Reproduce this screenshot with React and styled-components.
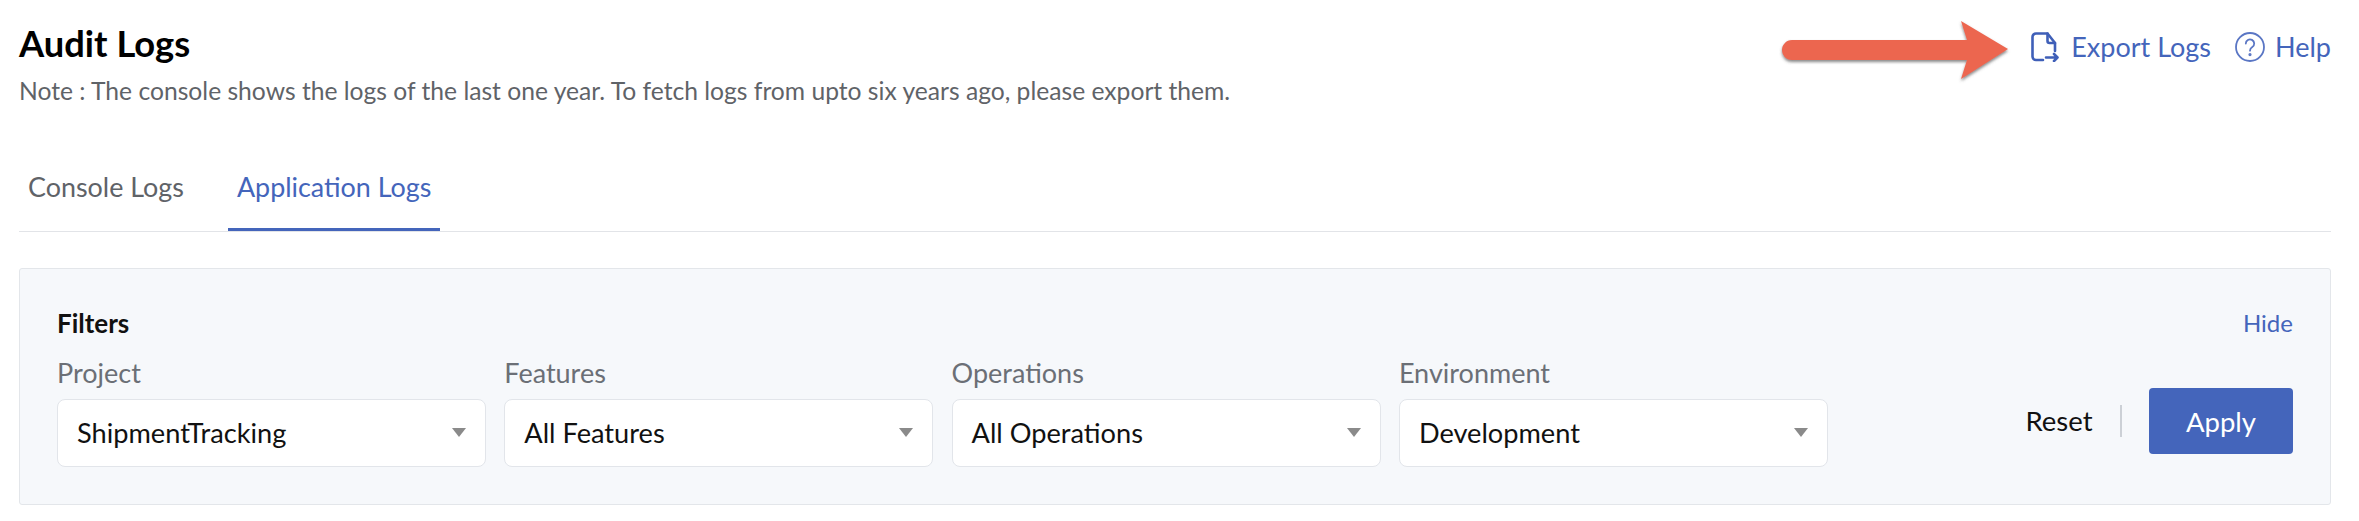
import React from 'react';
import styled, { createGlobalStyle } from 'styled-components';

const GlobalStyle = createGlobalStyle`
  html, body {
    margin: 0;
    background: #fff;
    font-family: Lato, "Open Sans", sans-serif;
  }
`;

const Page = styled.div`
  width: 2359px;
  height: 521px;
  box-sizing: border-box;
  padding: 10px 28px 0 19px;
  overflow: hidden;
`;

const Header = styled.header`
  display: flex;
  justify-content: space-between;
  align-items: flex-start;
`;

const TitleBlock = styled.div`
  padding-top: 12px;
`;

const Title = styled.h1`
  margin: 0;
  font-size: 36.3px;
  line-height: 42px;
  font-weight: 700;
  color: #000;
`;

const Note = styled.p`
  margin: 12px 0 0;
  font-size: 24.65px;
  line-height: 30px;
  color: #5f6368;
`;

const Actions = styled.div`
  display: flex;
  align-items: center;
  height: 74px;
`;

const ArrowMark = styled.svg`
  width: 232px;
  height: 74px;
  margin-right: 20px;
`;

const ActionLink = styled.a`
  display: flex;
  align-items: center;
  gap: ${p => p.$gap}px;
  margin-left: ${p => p.$offset}px;
  font-size: 27px;
  line-height: 34px;
  color: #4465bb;
`;

const Tabs = styled.nav`
  display: flex;
  gap: 35px;
  height: 66px;
  margin-top: 60px;
  border-bottom: 1px solid #e2e4e8;
  box-sizing: border-box;
`;

const Tab = styled.div`
  height: 65px;
  box-sizing: border-box;
  padding: 4px 9px 0;
  font-size: 26.9px;
  line-height: 34px;
  color: ${p => (p.$active ? '#4465bb' : '#5f6368')};
  border-bottom: ${p => (p.$active ? '3px solid #4465bb' : 'none')};
`;

const FilterCard = styled.section`
  margin-top: 36px;
  height: 237px;
  box-sizing: border-box;
  padding: 39px 37px 0 37px;
  background: #f6f8fb;
  border: 1px solid #e3e6ea;
  border-radius: 3px;
`;

const FilterHeader = styled.div`
  display: flex;
  justify-content: space-between;
  align-items: center;
`;

const FilterTitle = styled.h2`
  margin: 0;
  font-size: 26px;
  line-height: 30px;
  font-weight: 700;
  color: #111;
`;

const HideLink = styled.a`
  font-size: 24px;
  line-height: 30px;
  color: #4465bb;
`;

const FilterRow = styled.div`
  display: flex;
  align-items: flex-end;
  justify-content: space-between;
  margin-top: 18px;
`;

const Fields = styled.div`
  display: flex;
  gap: 18.3px;
`;

const Field = styled.label`
  display: flex;
  flex-direction: column;
  width: 429px;
`;

const FieldLabel = styled.span`
  font-size: 27px;
  line-height: 34px;
  margin-bottom: 9px;
  color: #6b6f76;
`;

const SelectBox = styled.div`
  display: flex;
  align-items: center;
  justify-content: space-between;
  height: 68px;
  box-sizing: border-box;
  padding: 0 19px 2px 19px;
  background: #fff;
  border: 1px solid #e2e5ea;
  border-radius: 8px;
  font-size: 27.2px;
  color: #111;
`;

const Caret = styled.span`
  width: 0;
  height: 0;
  border-left: 7.5px solid transparent;
  border-right: 7.5px solid transparent;
  border-top: 9px solid #8a8a8a;
`;

const Buttons = styled.div`
  display: flex;
  align-items: center;
  margin-bottom: 13px;
`;

const ResetButton = styled.span`
  font-size: 27.5px;
  line-height: 32px;
  color: #111;
  padding-right: 27.5px;
  margin-right: 27px;
  border-right: 2px solid #ccd0d6;
`;

const ApplyButton = styled.button`
  width: 144px;
  height: 66px;
  border: none;
  border-radius: 4px;
  background: #4465bb;
  color: #fff;
  font: 27.5px Lato, sans-serif;
`;

const ExportIcon = () => (
  <svg width="28" height="30" viewBox="0 0 28 30" fill="none" stroke="#3f5fb8" strokeWidth="2.6" strokeLinecap="round" strokeLinejoin="round">
    <path d="M12 28H5a3.5 3.5 0 0 1-3.5-3.5V5A3.5 3.5 0 0 1 5 1.5h11.5L24 11v8" />
    <path d="M16.5 1.5V9a2 2 0 0 0 2 2H24" />
    <path d="M15 25.5h11.5M23 22l3.5 3.5L23 29" />
  </svg>
);

const HelpIcon = () => (
  <svg width="30" height="30" viewBox="0 0 30 30" fill="none" stroke="#5a76c4" strokeWidth="1.8">
    <circle cx="15" cy="15" r="14" />
    <path d="M10.8 11.6a4.2 4.2 0 1 1 6.5 3.5c-1.4.9-2.3 1.7-2.3 3.6" strokeLinecap="round" />
    <circle cx="15" cy="22.6" r="0.7" />
  </svg>
);

const fields = [
  { label: 'Project', value: 'ShipmentTracking' },
  { label: 'Features', value: 'All Features' },
  { label: 'Operations', value: 'All Operations' },
  { label: 'Environment', value: 'Development' },
];

export default function App() {
  return (
    <Page>
      <GlobalStyle />
      <Header>
        <TitleBlock>
          <Title>Audit Logs</Title>
          <Note>Note : The console shows the logs of the last one year. To fetch logs from upto six years ago, please export them.</Note>
        </TitleBlock>
        <Actions>
          <ArrowMark viewBox="0 0 232 74">
            <defs>
              <filter id="arrowShadow" x="-5%" y="-20%" width="110%" height="140%">
                <feDropShadow dx="0" dy="2" stdDeviation="1.5" floodColor="#555" floodOpacity="0.7" />
              </filter>
            </defs>
            <path
              d="M13 30H188L182 11L229 39L182 69L188 50H13C7 50 3 45 3 40C3 35 7 30 13 30Z"
              fill="#ec6650"
              filter="url(#arrowShadow)"
            />
          </ArrowMark>
          <ActionLink $gap={12} $offset={0}>
            <ExportIcon />
            Export Logs
          </ActionLink>
          <ActionLink $gap={10} $offset={24}>
            <HelpIcon />
            Help
          </ActionLink>
        </Actions>
      </Header>
      <Tabs>
        <Tab>Console Logs</Tab>
        <Tab $active>Application Logs</Tab>
      </Tabs>
      <FilterCard>
        <FilterHeader>
          <FilterTitle>Filters</FilterTitle>
          <HideLink>Hide</HideLink>
        </FilterHeader>
        <FilterRow>
          <Fields>
            {fields.map(f => (
              <Field key={f.label}>
                <FieldLabel>{f.label}</FieldLabel>
                <SelectBox>
                  {f.value}
                  <Caret />
                </SelectBox>
              </Field>
            ))}
          </Fields>
          <Buttons>
            <ResetButton>Reset</ResetButton>
            <ApplyButton>Apply</ApplyButton>
          </Buttons>
        </FilterRow>
      </FilterCard>
    </Page>
  );
}
